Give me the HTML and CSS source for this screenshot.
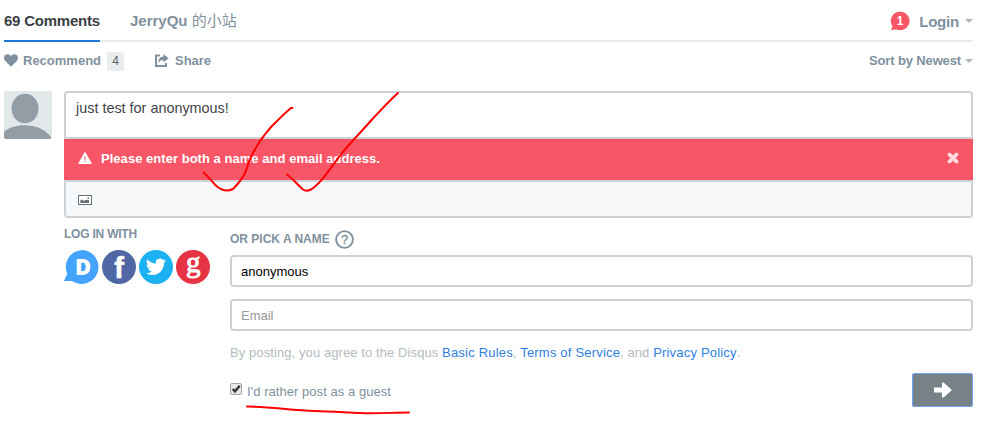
FILE: index.html
```html
<!DOCTYPE html>
<html lang="en">
<head>
<meta charset="utf-8">
<title>Comments</title>
<link rel="stylesheet" href="styles.css">
</head>
<body>
<main class="thread">
  <header class="tabs">
    <a class="tab tab-active"><span class="t-count">69 Comments</span></a>
    <a class="tab"><span class="t-site">JerryQu <span class="cjk">的小站</span></span></a>
    <a class="login">
      <svg class="notice" width="20" height="20" viewBox="0 0 20 20"><path d="M10 .8a9.2 9.2 0 1 1-3.2 17.7L.7 18.8l1.9-3.4A9.2 9.2 0 0 1 10 .8z" fill="#f85567"/><text x="10.2" y="14" text-anchor="middle">1</text></svg>
      <span class="t-login">Login</span><i class="caret"></i>
    </a>
  </header>

  <nav class="actions">
    <svg width="14" height="13" viewBox="0 0 14 13"><path d="M7 12.7L1.2 7C-.5 5.200-.3 2.300 1.300 1 3-.4 5.500-.1 7 2 8.500-.1 11-.4 12.700 1c1.600 1.300 1.800 4.200.1 6z" fill="#7f919e"/></svg>
    <span class="t-rec">Recommend</span><span class="votes">4</span>
    <svg class="share-icon" width="14" height="13" viewBox="0 0 14 13"><path d="M5 1.500H1v10.500h10V9" fill="none" stroke="#7f919e" stroke-width="2"/><path d="M8.500 0L13.500 4.200 8.500 8.500V6C6 6 4.500 7 3.300 9 3.300 5 5 2.700 8.500 2.500z" fill="#7f919e"/></svg>
    <span class="t-share">Share</span>
    <span class="sort"><span class="t-sort">Sort by Newest</span><i class="caret"></i></span>
  </nav>

  <section class="compose">
    <svg class="avatar" width="48" height="48" viewBox="0 0 48 48"><rect width="48" height="48" rx="1.500" fill="#e2e7ea"/><ellipse cx="21" cy="17.500" rx="13.500" ry="14.700" fill="#939da6"/><path d="M0 41C5 36.500 12 34.300 21 34.300S41 38 47 46l-.8 2H1.500L0 46.500z" fill="#939da6"/></svg>
    <div class="editor">
      <div class="message"><span class="t-msg">just test for anonymous!</span></div>
      <div class="error">
        <svg class="warning" width="14" height="12" viewBox="0 0 14 12"><path d="M7 .8L13 11.300H1z" fill="#fff" stroke="#fff" stroke-width="1.300" stroke-linejoin="round"/><path d="M7 4v3.800M7 8.800v1.300" stroke="#f85567" stroke-width="1.100"/></svg>
        <span class="t-err">Please enter both a name and email address.</span>
        <svg class="close" width="12" height="12" viewBox="0 0 12 12"><path d="M2.500 2.500l7 7M9.500 2.500l-7 7" stroke="#ffdde1" stroke-width="3.800" stroke-linecap="round"/></svg>
      </div>
      <div class="toolbar">
        <svg width="14" height="10" viewBox="0 0 14 10"><rect x=".5" y=".5" width="13" height="9" fill="#fff" stroke="#687078"/><path d="M2.300 8V5.500l1.500-1L6 6l2-1.500 1.500.8L11 5v3z" fill="#687078"/><rect x="9.500" y="2.500" width="1.500" height="1.500" fill="#687078"/></svg>
      </div>
    </div>
  </section>

  <section class="auth">
    <div class="social">
      <h2><span class="t-with">LOG IN WITH</span></h2>
      <div class="logos">
        <svg width="35" height="34" viewBox="0 0 35 34"><path d="M18 0a17 17 0 1 1-10 31.100L0 31l3.200-7.200A17 17 0 0 1 18 0z" fill="#44a3ff"/><text class="logo-d" x="19" y="25" text-anchor="middle">D</text></svg>
        <svg width="34" height="34" viewBox="0 0 34 34"><circle cx="17" cy="17" r="17" fill="#5067a6"/><text class="logo-f" x="17.200" y="28" text-anchor="middle">f</text></svg>
        <svg width="34" height="34" viewBox="0 0 34 34"><circle cx="17" cy="17" r="17" fill="#1cb2f2"/><path transform="translate(6.900 6.700) scale(.84)" d="M23.950 4.570a10 10 0 0 1-2.820.770 4.960 4.960 0 0 0 2.160-2.720c-.950.560-2 .960-3.120 1.180a4.920 4.920 0 0 0-8.380 4.480C7.690 8.090 4.070 6.130 1.640 3.160a4.930 4.930 0 0 0 1.520 6.570 4.900 4.900 0 0 1-2.230-.610v.060a4.920 4.920 0 0 0 3.950 4.830 5 5 0 0 1-2.210.080 4.940 4.940 0 0 0 4.600 3.420A9.870 9.870 0 0 1 0 19.540a14 14 0 0 0 7.550 2.210c9.050 0 14-7.500 14-13.980 0-.210 0-.420-.020-.630a9.900 9.900 0 0 0 2.420-2.570z" fill="#fff"/></svg>
        <svg width="34" height="34" viewBox="0 0 34 34"><circle cx="17" cy="17" r="17" fill="#e63444"/><text class="logo-g" x="17.300" y="21.500" text-anchor="middle">g</text></svg>
      </div>
    </div>
    <form class="guest">
      <h2><span class="t-pick">OR PICK A NAME</span><svg class="help" width="19" height="19" viewBox="0 0 19 19"><circle cx="9.500" cy="9.500" r="8.400" fill="none" stroke="#7f919e" stroke-width="1.900"/><text x="9.500" y="14" text-anchor="middle">?</text></svg></h2>
      <div class="field"><span class="t-name">anonymous</span></div>
      <div class="field placeholder"><span class="t-email">Email</span></div>
      <p class="terms"><span class="t-terms">By posting, you agree to the Disqus <a>Basic Rules</a>, <a>Terms of Service</a>, and <a>Privacy Policy</a>.</span></p>
      <div class="submit">
        <svg class="check" width="12" height="12" viewBox="0 0 12 12"><rect x=".5" y=".5" width="11" height="11" rx="1.500" fill="#e9e9e9" stroke="#a6a6a6"/><path d="M2.800 6l2.200 2.500L9.700 2.700" fill="none" stroke="#333" stroke-width="2.400"/></svg>
        <span class="t-guest">I'd rather post as a guest</span>
        <span class="send"><svg width="18" height="16" viewBox="0 0 18 16"><path d="M0 5.500h8V.5h1.500L18 8l-8.500 7.500H8V10.500H0z" fill="#fff"/></svg></span>
      </div>
    </form>
  </section>
</main>
<svg class="marks" width="993" height="422" viewBox="0 0 993 422">
  <path d="M203.500 172.500C208 176 213 183 217 186.500c5 4 11 5 16 2.500 5-5 9-10 12-16 3-7 4-13 8-20C260 139 265 134 272 126c7-7 14-14 19-18h1.500"/>
  <path d="M287 174.500C292 178 298 185 303 189.500c3 2 6 1 8 0 5-3 8-7 11-10C329 171 335 162 342 153 352 141 362 131 372 119.500 381 110 389 101 398 93"/>
  <path d="M247 406.500c23 0 45 4 68 4.500 15 .3 32 1.500 45 2 17 .8 33-.5 49-.5"/>
</svg>
</body>
</html>
```
FILE: styles.css
```css
body {
  margin: 0;
  background: #fff;
  font-family: "Liberation Sans", "Noto Sans CJK SC", sans-serif;
  font-size: 13px;
  color: #7f919e;
}
svg { display: block; flex: none; }
span { white-space: nowrap; }
.thread { width: 969px; padding-left: 4px; }
.tabs {
  display: flex;
  height: 42px;
  box-sizing: border-box;
  border-bottom: 2px solid #e7ebee;
  font-size: 15px;
  font-weight: 700;
}
.tab { height: 42px; line-height: 42px; margin-right: 30px; box-sizing: border-box; }
.tab-active { width: 96px; color: #3a3f45; border-bottom: 2px solid #2277d3; }
.t-count { letter-spacing: -.22px; }
.cjk { font-family: "Noto Sans CJK SC", sans-serif; font-weight: 400; font-size: 15px; line-height: 1; }
.login { display: flex; align-items: center; margin-left: auto; height: 42px; }
.t-login { letter-spacing: -.2px; }
.notice { margin-right: 9px; }
.notice text { fill: #fff; font-size: 12px; font-weight: 700; }
.caret { border: 4px solid transparent; border-top-color: #b2b8bd; border-bottom: 0; margin-left: 6px; }
.actions { display: flex; align-items: center; height: 37px; font-weight: 700; }
.t-rec { margin-left: 5px; }
.votes {
  width: 17px;
  height: 19px;
  margin: 2px 0 0 6px;
  border-radius: 2px;
  background: #e9edf0;
  color: #565d63;
  font-size: 12px;
  font-weight: 400;
  line-height: 19px;
  text-align: center;
}
.share-icon { margin: 0 6px 0 31px; }
.t-share { letter-spacing: -.05px; }
.sort { display: flex; align-items: center; margin-left: auto; }
.t-sort { letter-spacing: -.14px; }
.sort .caret { margin-left: 4px; }
.compose { display: flex; gap: 12px; margin-top: 12px; }
.editor { flex: 1; }
.message {
  height: 48px;
  box-sizing: border-box;
  border: 2px solid #cbd1d5;
  border-radius: 4px 4px 0 0;
  padding: 6px 10px;
  font-size: 14.4px;
  line-height: 18px;
  color: #3f4549;
}
.error {
  display: flex;
  align-items: center;
  height: 41px;
  padding: 0 14px 2px;
  box-sizing: border-box;
  background: #f85567;
  color: #fff;
  font-weight: 700;
}
.t-err { margin-left: 9px; letter-spacing: .035px; }
.warning { margin-bottom: 2px; }
.close { margin: 0 0 2px auto; }
.toolbar {
  display: flex;
  align-items: center;
  height: 38px;
  padding: 2px 0 0 12px;
  box-sizing: border-box;
  border: 2px solid #cbd1d5;
  border-radius: 0 0 4px 4px;
  background: #f6f8fa;
}
.auth { display: flex; padding-left: 60px; }
.social { width: 166px; }
h2 { margin: 0; font-size: 12px; font-weight: 700; }
.social h2 { height: 32px; line-height: 32px; letter-spacing: -.22px; }
.logos { display: flex; gap: 3px; }
.logos svg { overflow: visible; }
.logos text { fill: #fff; }
.logo-d { font-family: "Open Sans", sans-serif; font-weight: 800; font-size: 22px; }
.logo-f { font-weight: 700; font-size: 29px; stroke: #fff; stroke-width: .6px; }
.logo-g { font-family: "Liberation Serif", serif; font-size: 29px; stroke: #fff; stroke-width: .9px; }
.guest { flex: 1; padding-top: 11px; }
.guest h2 { display: flex; align-items: center; height: 20px; margin-bottom: 6px; }
.help { margin-left: 5px; }
.help text { fill: #7f919e; font-size: 13px; font-weight: 400; stroke: #7f919e; stroke-width: .3px; }
.field {
  height: 32px;
  box-sizing: border-box;
  margin-bottom: 12px;
  border: 2px solid #cbd1d5;
  border-radius: 4px;
  padding-left: 9px;
  line-height: 29px;
  color: #000;
}
.placeholder { color: #999; }
.terms { margin: 0; line-height: 20px; color: #b5bbc2; letter-spacing: .09px; }
.terms a { color: #2e7fdf; letter-spacing: .19px; }
.submit { display: flex; align-items: center; height: 34px; margin-top: 10px; }
.check { margin: 0 5px 2px 0; }
.t-guest { margin-top: 2px; letter-spacing: .05px; }
.send {
  display: flex;
  align-items: center;
  justify-content: center;
  width: 61px;
  height: 34px;
  box-sizing: border-box;
  margin-left: auto;
  border: 1px solid #6ea2f5;
  border-radius: 2px;
  background: #778287;
}
.marks { position: absolute; top: 0; left: 0; pointer-events: none; }
.marks path { fill: none; stroke: #f00; stroke-width: 2; stroke-linecap: round; }
```
